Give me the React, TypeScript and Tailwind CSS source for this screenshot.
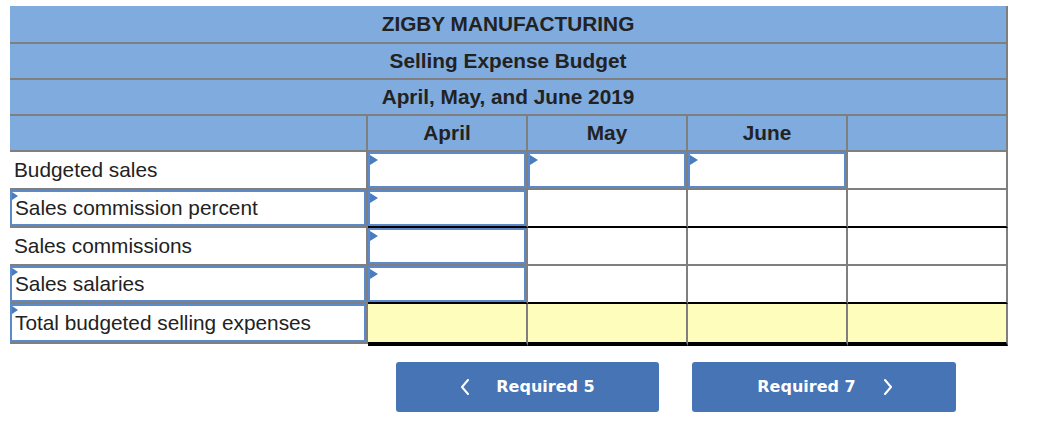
import React from "react";

const GRAY = "border-[#7f7f7f]";

type Row = {
  label: string;
  labelInput: boolean;
  cells: ("input" | "blank" | "total")[];
  line: "gray" | "black" | "thick";
};

const rows: Row[] = [
  { label: "Budgeted sales", labelInput: false, cells: ["input", "input", "input", "blank"], line: "gray" },
  { label: "Sales commission percent", labelInput: true, cells: ["input", "blank", "blank", "blank"], line: "black" },
  { label: "Sales commissions", labelInput: false, cells: ["input", "blank", "blank", "blank"], line: "gray" },
  { label: "Sales salaries", labelInput: true, cells: ["input", "blank", "blank", "blank"], line: "black" },
  { label: "Total budgeted selling expenses", labelInput: true, cells: ["total", "total", "total", "total"], line: "thick" },
];

function Marker({ small }: { small?: boolean }) {
  return small ? (
    <span className="absolute left-0 top-0 h-0 w-0 border-y-[4px] border-l-[6px] border-y-transparent border-l-[#4a7cc0]" />
  ) : (
    <span className="absolute left-0 top-[1px] h-0 w-0 border-y-[5px] border-l-[8px] border-y-transparent border-l-[#4a7cc0]" />
  );
}

function InputBox({ children, small }: { children?: React.ReactNode; small?: boolean }) {
  return (
    <div className="relative flex h-full w-full items-center border-2 border-[#5b89c9] bg-white pl-[3px]">
      <Marker small={small} />
      {children}
    </div>
  );
}

function Chevron({ dir }: { dir: "left" | "right" }) {
  return (
    <svg width="10" height="16" viewBox="0 0 10 16" fill="none">
      <polyline
        points={dir === "left" ? "8,1 2,8 8,15" : "2,1 8,8 2,15"}
        stroke="white"
        strokeWidth="2"
        strokeLinecap="round"
        strokeLinejoin="round"
      />
    </svg>
  );
}

export default function App() {
  return (
    <div className="min-h-[440px] w-[1046px] bg-white pl-[10px] pt-[6px] font-['Liberation_Sans',Arial,sans-serif] text-[#222]">
      {/* Title rows */}
      <div className={`flex h-[38px] w-[998px] items-center justify-center border-b-2 border-r-2 ${GRAY} bg-[#7fabdf] text-[20.8px] font-bold`}>
        ZIGBY MANUFACTURING
      </div>
      <div className={`flex h-[36px] w-[998px] items-center justify-center border-b-2 border-r-2 ${GRAY} bg-[#7fabdf] text-[20.8px] font-bold`}>
        Selling Expense Budget
      </div>
      <div className={`flex h-[36px] w-[998px] items-center justify-center border-b-2 border-r-2 ${GRAY} bg-[#7fabdf] text-[20.8px] font-bold`}>
        April, May, and June 2019
      </div>

      {/* Month header */}
      <div className="flex">
        <div className={`h-[36px] w-[358px] border-b-2 border-r-2 ${GRAY} bg-[#7fabdf]`} />
        {["April", "May", "June", ""].map((m, i) => (
          <div
            key={i}
            className={`flex h-[36px] w-[160px] items-center justify-center border-b-2 border-r-2 ${GRAY} bg-[#7fabdf] text-[20.8px] font-bold`}
          >
            {m}
          </div>
        ))}
      </div>

      {/* Body */}
      {rows.map((r) => {
        const isTotal = r.line === "thick";
        const numLine =
          r.line === "gray"
            ? `h-[38px] border-b-2 ${GRAY}`
            : r.line === "black"
              ? "h-[38px] border-b-2 border-b-black"
              : "h-[42px] border-b-4 border-b-black";
        return (
          <div key={r.label} className="flex items-start">
            <div
              className={`${isTotal ? "h-[40px]" : "h-[38px]"} w-[358px] border-b-2 border-r-2 ${GRAY} text-[20.8px]`}
            >
              {r.labelInput ? (
                <InputBox small>
                  <span className="leading-none">{r.label}</span>
                </InputBox>
              ) : (
                <div className="flex h-full items-center pl-[4px] leading-none">{r.label}</div>
              )}
            </div>
            {r.cells.map((c, i) => (
              <div
                key={i}
                className={`${numLine} w-[160px] border-r-2 border-r-[#7f7f7f] ${c === "total" ? "bg-[#fffdbc]" : "bg-white"}`}
              >
                {c === "input" && <InputBox />}
              </div>
            ))}
          </div>
        );
      })}

      {/* Navigation */}
      <div className="ml-[386px] mt-[16px] flex gap-[33px] font-['DejaVu_Sans',sans-serif] text-[16px] font-bold text-white">
        <button className="flex h-[50px] w-[263px] items-center justify-center gap-[26px] rounded-[3px] bg-[#4674b5]">
          <Chevron dir="left" />
          <span>Required 5</span>
        </button>
        <button className="flex h-[50px] w-[264px] items-center justify-center gap-[27px] rounded-[3px] bg-[#4674b5] pl-[2px]">
          <span>Required 7</span>
          <Chevron dir="right" />
        </button>
      </div>
    </div>
  );
}
